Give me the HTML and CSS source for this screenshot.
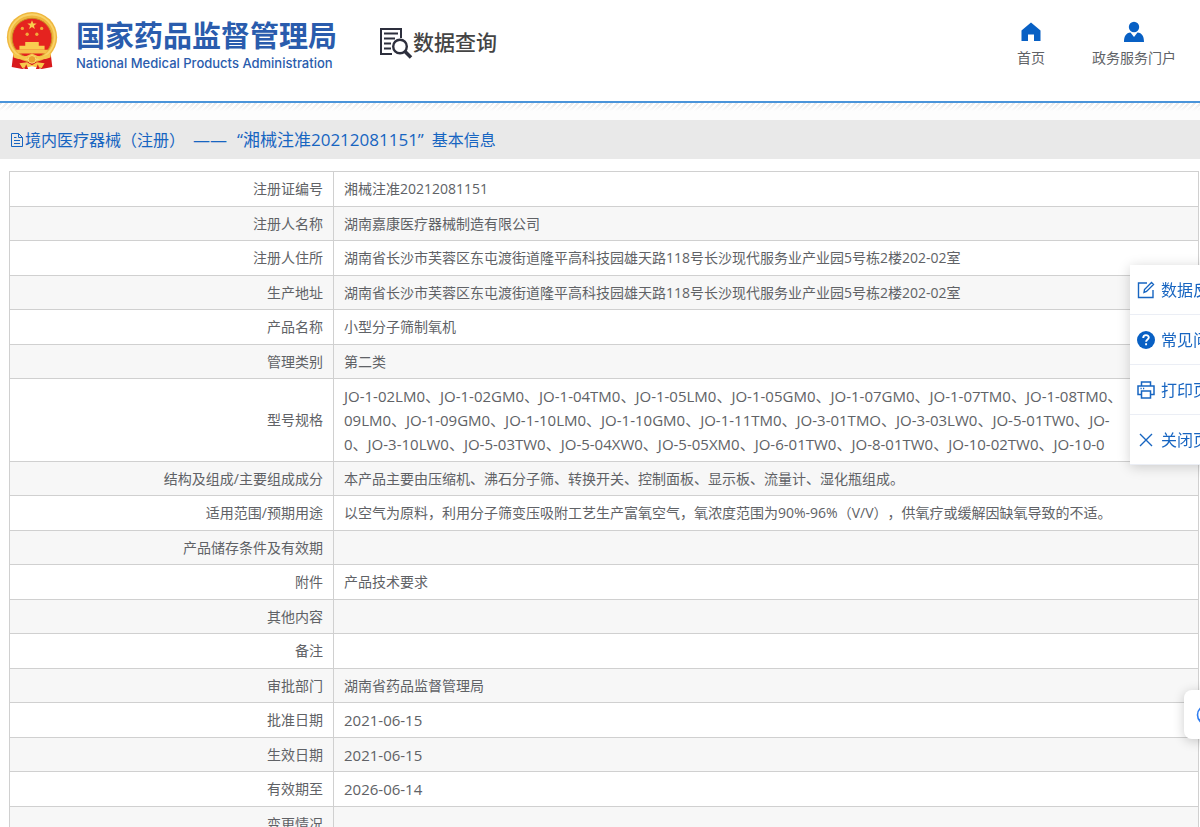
FILE: index.html
```
<!DOCTYPE html>
<html lang="zh-CN">
<head>
<meta charset="utf-8">
<meta name="viewport" content="width=device-width, initial-scale=1">
<title>国家药品监督管理局 数据查询</title>
<link rel="stylesheet" href="styles.css">
</head>
<body>
<header class="header">
  <a class="brand" href="#">
    <svg class="emblem" viewBox="0 0 54 60" aria-hidden="true">
      <path d="M8 40 L46 40 L48 57 L37 59 L27 55 L17 59 L6 57Z" fill="#d81a1c"/>
      <circle cx="27" cy="26" r="26" fill="#efb73e"/>
      <circle cx="27" cy="26" r="23.500" fill="none" stroke="#f9d368" stroke-width="2"/>
      <circle cx="27" cy="27" r="20.500" fill="#e5231f" stroke="#c98a25"/>
      <path d="M27 8.500l1.300 3.500h3.500l-2.800 2.200 1 3.500-3-2.100-3 2.100 1-3.500-2.800-2.200h3.500z" fill="#f8cf4e"/>
      <g fill="#f2a93b"><circle cx="17" cy="17" r="1.700"/><circle cx="37" cy="17" r="1.700"/><circle cx="22" cy="23" r="1.700"/><circle cx="32" cy="23" r="1.700"/></g>
      <path d="M20 31h14v4h6v4H14v-4h6z" fill="#f9cc50"/>
      <path d="M10 39h34l-3 4H13z" fill="#f6c04a"/>
      <path d="M7 42 Q17 49 27 43 Q37 49 47 42 L46 47 Q36 51 31 47 Q27 44 23 47 Q18 51 8 47Z" fill="#f5c74b"/>
      <circle cx="27" cy="49" r="4" fill="#e9a22e" stroke="#fbdc74"/>
      <path d="M14 53l8-1 5 3 5-3 8 1-3 5-6-1-4-1-4 1-6 1z" fill="#f7ca4c"/>
      <path d="M21 54l2 5h-4zM33 54l2 5h-4z" fill="#d81a1c"/>
    </svg>
    <span class="brand-text">
      <span class="brand-name">国家药品监督管理局</span>
      <span class="brand-sub">National Medical Products Administration</span>
    </span>
  </a>
  <a class="section" href="#">
    <svg class="section-icon" viewBox="0 0 34 34" fill="none" stroke="#2d2f3d" aria-hidden="true">
      <path d="M22 12V3H2v25h11" stroke-width="2"/>
      <path d="M5 7.500h14M5 12.500h11M5 17.500h7M5 22.500h7" stroke-width="1.800"/>
      <circle cx="21" cy="20.500" r="6.800" stroke-width="2.400"/>
      <path d="M26 25.500l6 6" stroke-width="3.600"/>
    </svg>
    <span>数据查询</span>
  </a>
  <nav class="nav">
    <a class="nav-link" href="#">
      <svg class="nav-icon" viewBox="0 0 22 22" fill="#0860c4" aria-hidden="true"><path d="M11 1.500L1.500 9.500V20H8v-6.500h6V20h6.500V9.500z"/></svg>
      <span>首页</span>
    </a>
    <a class="nav-link" href="#">
      <svg class="nav-icon" viewBox="0 0 22 22" fill="#0860c4" aria-hidden="true"><circle cx="11" cy="6" r="5.200"/><path d="M1 21c0-6 2-9 6.500-9.500L11 16l3.500-4.500C19 12 21 15 21 21z"/></svg>
      <span>政务服务门户</span>
    </a>
  </nav>
</header>
<div class="hatch"></div>
<main>
  <h1 class="title">
    <svg class="title-icon" viewBox="0 0 16 16" fill="none" stroke="#1765c1" aria-hidden="true"><path d="M2.500 1.500h7l4 4v9h-11zM9.500 1.500v4h4M5 5.500h2.500M5 8.500h6M5 11.500h6"/></svg>
    <span>境内医疗器械（注册）</span>
    <span class="title-dash">——</span>
    <span class="title-number">“湘械注准20212081151”</span>
    <span>基本信息</span>
  </h1>
  <table class="info">
    <tbody>
      <tr><th scope="row">注册证编号</th><td>湘械注准20212081151</td></tr>
      <tr><th scope="row">注册人名称</th><td>湖南嘉康医疗器械制造有限公司</td></tr>
      <tr><th scope="row">注册人住所</th><td>湖南省长沙市芙蓉区东屯渡街道隆平高科技园雄天路118号长沙现代服务业产业园5号栋2楼202-02室</td></tr>
      <tr><th scope="row">生产地址</th><td>湖南省长沙市芙蓉区东屯渡街道隆平高科技园雄天路118号长沙现代服务业产业园5号栋2楼202-02室</td></tr>
      <tr><th scope="row">产品名称</th><td>小型分子筛制氧机</td></tr>
      <tr><th scope="row">管理类别</th><td>第二类</td></tr>
      <tr class="models"><th scope="row">型号规格</th><td class="codes">JO-1-02LM0、JO-1-02GM0、JO-1-04TM0、JO-1-05LM0、JO-1-05GM0、JO-1-07GM0、JO-1-07TM0、JO-1-08TM0、<br>09LM0、JO-1-09GM0、JO-1-10LM0、JO-1-10GM0、JO-1-11TM0、JO-3-01TMO、JO-3-03LW0、JO-5-01TW0、JO-<br>0、JO-3-10LW0、JO-5-03TW0、JO-5-04XW0、JO-5-05XM0、JO-6-01TW0、JO-8-01TW0、JO-10-02TW0、JO-10-0</td></tr>
      <tr><th scope="row">结构及组成/主要组成成分</th><td>本产品主要由压缩机、沸石分子筛、转换开关、控制面板、显示板、流量计、湿化瓶组成。</td></tr>
      <tr><th scope="row">适用范围/预期用途</th><td>以空气为原料，利用分子筛变压吸附工艺生产富氧空气，氧浓度范围为90%-96%（V/V），供氧疗或缓解因缺氧导致的不适。</td></tr>
      <tr><th scope="row">产品储存条件及有效期</th><td></td></tr>
      <tr><th scope="row">附件</th><td>产品技术要求</td></tr>
      <tr><th scope="row">其他内容</th><td></td></tr>
      <tr><th scope="row">备注</th><td></td></tr>
      <tr><th scope="row">审批部门</th><td>湖南省药品监督管理局</td></tr>
      <tr><th scope="row">批准日期</th><td class="codes">2021-06-15</td></tr>
      <tr><th scope="row">生效日期</th><td class="codes">2021-06-15</td></tr>
      <tr><th scope="row">有效期至</th><td class="codes">2026-06-14</td></tr>
      <tr><th scope="row">变更情况</th><td></td></tr>
    </tbody>
  </table>
</main>
<aside class="tools">
  <button class="tool" type="button">
    <svg class="tool-icon" viewBox="0 0 18 18" fill="none" stroke="#1765c1" stroke-width="1.400" aria-hidden="true"><path d="M10 2H1.500v14.500h14.500V9M7 11.500l.5-3L14.500 1.500l2 2L9.500 10.500z"/></svg>
    <span>数据反馈</span>
  </button>
  <button class="tool" type="button">
    <svg class="tool-icon" viewBox="0 0 18 18" aria-hidden="true"><circle cx="9" cy="9" r="9" fill="#0860c4"/><path d="M6.200 7c0-3.800 5.600-3.600 5.600-.4 0 1.900-2.700 2-2.700 4.200M9.100 12.200v2" fill="none" stroke="#fff" stroke-width="1.900"/></svg>
    <span>常见问题</span>
  </button>
  <button class="tool" type="button">
    <svg class="tool-icon" viewBox="0 0 18 18" fill="none" stroke="#1765c1" stroke-width="1.500" aria-hidden="true"><path d="M4.500 5V1h9v4M4.500 13.500H1V5h16v8.500h-3.500M4.500 10h9v7h-9zM3.500 7.500h1.200M6 7.500h1.200"/></svg>
    <span>打印页面</span>
  </button>
  <button class="tool" type="button">
    <svg class="tool-icon" viewBox="0 0 18 18" fill="none" stroke="#1765c1" stroke-width="1.400" aria-hidden="true"><path d="M3 3l12 12M15 3L3 15"/></svg>
    <span>关闭页面</span>
  </button>
</aside>
<button class="assistant" type="button" aria-label="智能助手">
  <svg class="assistant-icon" viewBox="0 0 22 22" aria-hidden="true"><circle cx="11" cy="11" r="9.500" fill="#fff" stroke="#2f7df0" stroke-width="1.600"/><path d="M2 14q4 2 7 5.500q-5 0-7-5.500z" fill="#2f7df0"/></svg>
</button>
</body>
</html>
```
FILE: styles.css
```
* {
  box-sizing: border-box;
}

html {
  overflow-x: hidden;
  scrollbar-width: none;
}

body {
  margin: 0;
  background: #fff;
  color: #606266;
  font: 14px/24px "Open Sans", "Noto Sans CJK SC", sans-serif;
  text-spacing-trim: space-all;
}

a {
  color: inherit;
  text-decoration: none;
}

svg {
  display: block;
  flex: none;
}

button {
  border: 0;
  background: none;
  color: inherit;
  font: inherit;
}

.header {
  display: flex;
  align-items: flex-start;
  height: 103px;
  padding: 12px 24px 0 5px;
  border-bottom: 2px solid #4a94da;
}

.brand {
  display: flex;
  gap: 17px;
  color: #2a5cad;
}

.emblem {
  width: 54px;
  height: 58px;
}

.brand-text {
  display: flex;
  flex-direction: column;
  padding-top: 3px;
}

.brand-name {
  font: bold 29px/38px "Noto Sans CJK SC", sans-serif;
}

.brand-sub {
  font: 500 13px/20px Inter, sans-serif;
}

.section {
  display: flex;
  align-items: center;
  margin-left: 42px;
  padding-top: 14px;
  color: #444;
  font: 500 21px/30px "Noto Sans CJK SC", sans-serif;
}

.section span {
  padding-bottom: 4px;
}

.section-icon {
  width: 34px;
  height: 34px;
}

.nav {
  display: flex;
  gap: 47px;
  margin-left: auto;
  padding-top: 9px;
}

.nav-link {
  display: flex;
  flex-direction: column;
  align-items: center;
  gap: 3px;
}

.nav-icon {
  width: 22px;
  height: 22px;
}

.hatch {
  height: 17px;
  background:
    linear-gradient(rgba(255, 255, 255, 0), #fdfdfd 8px),
    repeating-linear-gradient(135deg, #e9e9e9 0 2px, #fff 2px 4px);
}

.title {
  display: flex;
  align-items: center;
  height: 39px;
  margin: 0;
  padding: 0 9px;
  background: #e9e9e9;
  color: #1765c1;
  font-size: 16px;
  font-weight: 400;
}

.title-icon {
  width: 16px;
  height: 16px;
}

.title-dash {
  margin: 0 10px 0 8px;
  font-size: 17px;
}

.title-number {
  margin-right: 8px;
  font-size: 17px;
}

.info {
  width: calc(100% - 10px);
  margin: 12px 1px 0 9px;
  border-collapse: collapse;
  table-layout: fixed;
}

.info tr:nth-child(odd) {
  height: 35px;
}

.info tr:nth-child(even) {
  height: 34px;
  background: #f7f7f7;
}

.info th,
.info td {
  padding: 4px 10px;
  border: 1px solid #d0d0d0;
  font-weight: 400;
  text-align: left;
}

.info th {
  width: 324px;
  text-align: right;
}

.info .models td {
  padding-top: 5px;
  padding-bottom: 5px;
}

.info .codes {
  font-size: 15px;
  white-space: nowrap;
}

.tools {
  position: fixed;
  top: 265px;
  right: -40px;
  width: 110px;
  background: #fff;
  color: #1765c1;
  box-shadow: 0 2px 12px rgba(0, 0, 0, 0.18);
}

.tool {
  display: flex;
  align-items: center;
  gap: 6px;
  width: 100%;
  height: 50px;
  padding: 0 7px;
  border-bottom: 1px solid #ebeef5;
  font-size: 16px;
  white-space: nowrap;
}

.tool-icon {
  width: 18px;
  height: 18px;
}

.assistant {
  position: fixed;
  top: 690px;
  right: -32px;
  width: 48px;
  height: 49px;
  padding: 0 12px;
  border-radius: 8px;
  background: #fff;
  box-shadow: 0 2px 12px rgba(0, 0, 0, 0.2);
}

.assistant-icon {
  width: 22px;
  height: 22px;
}
```
